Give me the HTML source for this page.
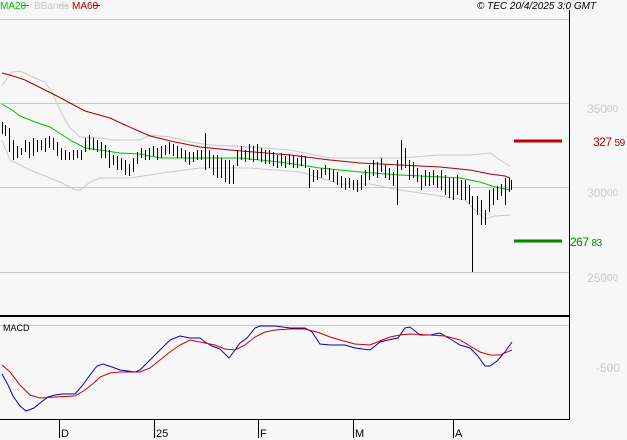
<!DOCTYPE html>
<html><head><style>
html,body{margin:0;padding:0;background:#f7f7f7;}
svg{display:block;font-family:"Liberation Sans",sans-serif;}
</style></head><body>
<svg width="627" height="440" viewBox="0 0 627 440" xmlns="http://www.w3.org/2000/svg">
<rect width="627" height="440" fill="#f7f7f7"/>
<g stroke="#c8c8c8" stroke-width="1">
<line x1="0" y1="19.5" x2="569" y2="19.5"/>
<line x1="0" y1="103.5" x2="569" y2="103.5"/>
<line x1="0" y1="187.5" x2="569" y2="187.5"/>
<line x1="0" y1="272.5" x2="569" y2="272.5"/>
<line x1="0" y1="325.5" x2="569" y2="325.5"/>
</g>
<line x1="569.5" y1="10" x2="569.5" y2="420" stroke="#000"/>
<line x1="0" y1="316" x2="570" y2="316" stroke="#000" stroke-width="2"/>
<line x1="0" y1="419.5" x2="570" y2="419.5" stroke="#000"/>
<text x="0" y="9" font-size="10" fill="#00c000">MA20</text>
<line x1="22" y1="5.5" x2="29" y2="5.5" stroke="#00c000"/>
<text x="34" y="9" font-size="10" fill="#c8c8c8">BBands</text>
<line x1="60" y1="5.5" x2="68" y2="5.5" stroke="#c8c8c8"/>
<text x="72" y="9" font-size="10" fill="#a00000">MA60</text>
<line x1="93" y1="5.5" x2="100" y2="5.5" stroke="#a00000"/>
<text x="477" y="9" font-size="10" font-style="italic" fill="#000">© TEC 20/4/2025 3:0 GMT</text>
<polyline fill="none" stroke="#c8c8c8" points="2,85 12,72 20,71 35,78 45,82 52,92 60,110 70,128 80,137 100,138 115,140 140,140 150,135 170,137 190,142 210,145 250,147 290,150 330,158 370,158 400,158 440,155 470,155 490,153 500,160 510,166"/>
<polyline fill="none" stroke="#c8c8c8" points="2,140 10,160 30,170 60,182 75,190 80,190 90,182 100,178 130,178 170,172 200,168 250,168 300,172 340,184 370,184 400,190 440,196 465,200 475,210 485,219 495,216 510,215"/>
<polyline fill="none" stroke="#a00000" points="2,73 10,75 25,80 35,85 55,95 70,103 85,111 110,118 125,125 150,136 175,142 200,147 230,150 290,155 330,160 360,163 400,165 440,167 470,170 490,174 505,176 510,178"/>
<polyline fill="none" stroke="#00c000" points="2,104 12,110 20,116 35,122 50,127 70,140 85,148 100,150 120,153 140,154 160,158 200,158 240,158 280,162 320,168 360,172 400,175 440,177 460,178 480,182 495,187 510,190"/>
<path fill="none" stroke="#000" stroke-width="1" d="
M2.5 122V134 M5.5 125V136 M9.5 128V152 M13.5 140V160 M17.5 146V158 M21.5 148V155
M25.5 140V152 M29.5 142V158 M33.5 138V156 M37.5 140V152 M41.5 140V150 M45.5 138V152 M49.5 136V148 M53.5 138V150 M57.5 142V156
M61.5 148V160 M65.5 150V160 M69.5 152V160 M73.5 150V160 M77.5 150V158 M81.5 150V160 M85.5 138V152 M89.5 135V150 M93.5 138V150 M97.5 140V152 M101.5 142V158 M105.5 145V158
M109.5 150V168 M113.5 155V165 M117.5 156V170 M121.5 158V170 M125.5 160V175 M129.5 164V176 M133.5 158V172 M137.5 152V164 M141.5 148V158 M145.5 150V160 M149.5 148V160 M153.5 146V156 M157.5 148V160 M161.5 146V158 M165.5 145V155 M169.5 142V154 M173.5 144V156 M177.5 146V158 M181.5 148V158 M185.5 150V162 M189.5 152V165 M193.5 152V162 M197.5 150V160 M201.5 150V160 M205.5 133V170 M209.5 150V168 M213.5 155V175 M217.5 155V178 M221.5 158V178 M225.5 160V182 M229.5 160V184 M233.5 165V184
M237.5 150V166 M241.5 146V160 M245.5 150V162 M249.5 144V160 M253.5 146V162 M257.5 144V160 M261.5 148V162 M265.5 150V164 M269.5 150V164 M273.5 152V166 M277.5 155V168 M281.5 153V166 M285.5 156V168 M289.5 154V165 M293.5 156V168 M297.5 158V168 M301.5 155V166 M305.5 156V168
M309.5 168V188 M313.5 170V182 M317.5 170V180 M321.5 168V178 M325.5 165V175 M329.5 168V180 M333.5 170V182 M337.5 172V185 M341.5 176V188 M345.5 178V190 M349.5 178V188 M353.5 180V190 M357.5 180V192 M361.5 175V190 M365.5 170V186 M369.5 165V180 M373.5 160V176 M377.5 162V178 M381.5 158V172 M385.5 165V178 M389.5 168V180 M393.5 172V186 M397.5 160V205 M401.5 140V170 M405.5 148V168 M409.5 160V180 M413.5 162V178 M417.5 168V182 M421.5 175V190 M425.5 170V186 M429.5 172V186 M433.5 170V185 M437.5 175V188 M441.5 170V190 M445.5 175V195 M449.5 178V198 M453.5 178V200 M457.5 175V195 M461.5 180V200 M465.5 180V200 M469.5 185V204
M472.5 196V272 M477.5 196V215 M481.5 200V225 M485.5 210V225 M489.5 190V212 M493.5 188V205 M497.5 186V200 M501.5 184V196 M505.5 178V205 M509.5 178V192 M511.5 180V190"/>
<line x1="514" y1="141" x2="562" y2="141" stroke="#c00000" stroke-width="3"/>
<text x="593" y="146" font-size="12" fill="#c00000" letter-spacing="-0.5">327<tspan font-size="10" dx="3">59</tspan></text>
<line x1="514" y1="241" x2="562" y2="241" stroke="#008800" stroke-width="3"/>
<text x="570" y="246" font-size="12" fill="#008800" letter-spacing="-0.5">267<tspan font-size="10" dx="3">83</tspan></text>
<g font-size="12" fill="#c8c8c8">
<text x="587" y="113">350<tspan font-size="10" dy="-1">00</tspan></text>
<text x="587" y="197">300<tspan font-size="10" dy="-1">00</tspan></text>
<text x="587" y="282">250<tspan font-size="10" dy="-1">00</tspan></text>
<text x="596" y="372">-500</text>
</g>
<text x="3" y="331" font-size="9" fill="#000">MACD</text>
<polyline fill="none" stroke="#0000c8" points="2,374 8,385 13,396 20,406 26,411 34,408 40,403 48,397 55,395 62,394 75,394 82,386 90,375 97,366 103,364 112,367 120,370 135,372 140,370 148,362 160,350 170,340 180,336 190,338 200,338 205,342 212,346 220,349 229,358 235,350 240,343 247,338 255,328 260,326 275,326 290,328 305,328 312,332 320,344 330,345 345,345 355,348 370,350 380,342 388,340 398,338 405,328 410,327 420,335 430,335 440,333 452,340 460,345 470,348 477,355 485,366 490,366 497,361 505,352 512,342"/>
<polyline fill="none" stroke="#c80000" points="2,365 10,372 20,385 30,395 40,398 55,397 75,396 85,390 95,382 100,377 110,373 120,372 140,372 150,368 160,360 170,352 180,345 190,340 200,342 215,345 225,349 235,350 245,345 255,337 265,332 275,330 290,329 305,329 320,333 330,337 340,340 355,344 370,345 380,341 390,337 400,335 410,334 430,335 445,336 460,340 470,346 480,352 490,355 500,355 512,350"/>
<g stroke="#000">
<line x1="59.5" y1="420" x2="59.5" y2="438"/>
<line x1="154.5" y1="420" x2="154.5" y2="438"/>
<line x1="258.5" y1="420" x2="258.5" y2="438"/>
<line x1="353.5" y1="420" x2="353.5" y2="438"/>
<line x1="453.5" y1="420" x2="453.5" y2="438"/>
</g>
<g font-size="11" fill="#000">
<text x="61" y="437">D</text>
<text x="156" y="437">25</text>
<text x="260" y="437">F</text>
<text x="355" y="437">M</text>
<text x="455" y="437">A</text>
</g>
</svg>
</body></html>
